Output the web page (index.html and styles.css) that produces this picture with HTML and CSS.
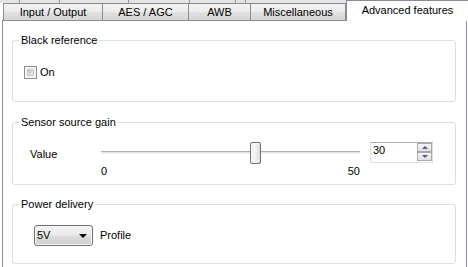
FILE: index.html
```html
<!DOCTYPE html>
<html>
<head>
<meta charset="utf-8">
<link rel="stylesheet" href="styles.css">
</head>
<body>
<div class="window">
  <div class="tabbar">
    <div class="tab t1">Input / Output</div>
    <div class="tab t2">AES / AGC</div>
    <div class="tab t3">AWB</div>
    <div class="tab t4">Miscellaneous</div>
    <div class="tab active">Advanced features</div>
  </div>
  <div class="panel">
    <fieldset class="group g1">
      <legend>Black reference</legend>
      <div class="check">
        <span class="box"><span class="box-inner"></span></span>
        <span class="check-label">On</span>
      </div>
    </fieldset>
    <fieldset class="group g2">
      <legend>Sensor source gain</legend>
      <div class="gain-row">
        <span class="gain-label">Value</span>
        <div class="slider">
          <div class="track-area">
            <div class="track"></div>
            <div class="thumb" style="left:149px"></div>
          </div>
          <div class="ticks"><span>0</span><span>50</span></div>
        </div>
        <div class="spin">
          <span class="spin-value">30</span>
          <span class="spin-buttons">
            <span class="spin-btn"><span class="tri-up"></span></span>
            <span class="spin-btn"><span class="tri-down"></span></span>
          </span>
        </div>
      </div>
    </fieldset>
    <fieldset class="group g3">
      <legend>Power delivery</legend>
      <div class="power-row">
        <div class="combo">
          <span class="combo-value">5V</span>
          <span class="combo-arrow"></span>
        </div>
        <span class="combo-label">Profile</span>
      </div>
    </fieldset>
  </div>
</div>
</body>
</html>
```
FILE: styles.css
```css
html, body {
  margin: 0;
  padding: 0;
  background: #ffffff;
  overflow: hidden;
}
body {
  font-family: "Liberation Sans", Arial, sans-serif;
  font-size: 11px;
  color: #000;
  width: 468px;
  height: 267px;
}
.window {
  width: 468px;
}
.tabbar {
  display: flex;
  align-items: flex-end;
  height: 20px;
  padding-left: 3px;
  box-sizing: border-box;
  background:
    linear-gradient(#8f929a, #8f929a) 19px 0 / 1px 3px no-repeat,
    linear-gradient(#8f929a, #8f929a) 59px 0 / 1px 3px no-repeat,
    linear-gradient(#8f929a, #8f929a) 128px 0 / 1px 3px no-repeat,
    linear-gradient(#8f929a, #8f929a) 189px 0 / 1px 3px no-repeat,
    linear-gradient(#8f929a, #8f929a) 235px 0 / 1px 3px no-repeat,
    linear-gradient(#8f929a, #8f929a) 245px 0 / 1px 3px no-repeat,
    linear-gradient(#e4e4e4, #e4e4e4) 0 0 / 100% 3px no-repeat;
}
.tab {
  box-sizing: border-box;
  height: 17px;
  line-height: 16px;
  text-align: center;
  white-space: nowrap;
  border-top: 1px solid #898c95;
  border-left: 1px solid #898c95;
  background: linear-gradient(#f3f3f3, #ebebeb 50%, #dfdfdf 55%, #d6d6d6);
}
.t1 { width: 99px; }
.t2 { width: 86px; }
.t3 { width: 62px; }
.t4 { width: 96px; border-right: 1px solid #898c95; }
.tab.active {
  flex: 1;
  height: 21px;
  line-height: 18px;
  margin-bottom: -1px;
  background: #ffffff;
  position: relative;
  z-index: 1;
  padding-bottom: 2px;
}
.panel {
  box-sizing: border-box;
  margin-left: 2px;
  width: 465px;
  height: 260px;
  border: 1px solid #898c95;
  border-bottom: none;
  background: #ffffff;
  padding: 13px 10px 0 9px;
}
.group {
  margin: 0;
  min-width: 0;
  border: 1px solid #d5dfe5;
  border-radius: 3px;
  padding: 0 6px;
}
.group legend {
  padding: 0 2px;
  line-height: 13px;
  font-size: 11px;
}
.g1 { padding-top: 19px; padding-bottom: 22px; margin-bottom: 14px; }
.g2 { padding-top: 13px; padding-bottom: 6px; margin-bottom: 13px; }
.g3 { padding-top: 14px; padding-bottom: 17px; }

/* checkbox */
.check {
  display: flex;
  align-items: center;
  height: 13px;
  margin-left: 5px;
}
.box {
  box-sizing: border-box;
  width: 13px;
  height: 13px;
  border: 1px solid #8e8f8f;
  background: #f4f4f4;
  padding: 2px;
  display: flex;
}
.box-inner {
  flex: 1;
  background: linear-gradient(135deg, #b7bcc2, #dcdddf 60%, #ececec);
  border: 1px solid #c9cbce;
}
.check-label {
  margin-left: 3px;
  line-height: 13px;
}

/* gain row */
.gain-row {
  display: flex;
  align-items: flex-start;
  padding-left: 11px;
}
.gain-label {
  width: 71px;
  margin-top: 6px;
  line-height: 13px;
}
.slider {
  width: 259px;
}
.track-area {
  position: relative;
  box-sizing: border-box;
  height: 22px;
  padding-top: 9px;
}
.track {
  height: 1px;
  border-top: 1px solid #b0b0b0;
  background: #e3e3e3;
  border-bottom: 1px solid #f4f4f4;
}
.thumb {
  position: absolute;
  top: 0;
  box-sizing: border-box;
  width: 11px;
  height: 22px;
  border: 1px solid #707070;
  border-radius: 2px;
  background: linear-gradient(90deg, #ececec, #f6f6f6 40%, #dcdcdc);
  box-shadow: inset 1px 1px 0 #ffffff;
}
.ticks {
  display: flex;
  justify-content: space-between;
  margin-top: 1px;
  line-height: 13px;
}
.spin {
  box-sizing: border-box;
  display: flex;
  width: 63px;
  height: 21px;
  margin-left: 10px;
  border: 1px solid #dbdfe6;
  border-top-color: #abadb3;
  border-left-color: #e2e3ea;
  background: #ffffff;
}
.spin-value {
  flex: 1;
  padding-left: 2px;
  padding-top: 1px;
  line-height: 13px;
}
.spin-buttons {
  display: flex;
  flex-direction: column;
  width: 15px;
}
.spin-btn {
  box-sizing: border-box;
  height: 9px;
  border: 1px solid #a9a9a9;
  background: linear-gradient(#f3f3f3, #e2e2e2);
  display: flex;
  align-items: center;
  justify-content: center;
}
.tri-up {
  width: 0;
  height: 0;
  border-left: 3px solid transparent;
  border-right: 3px solid transparent;
  border-bottom: 3px solid #4d6185;
}
.tri-down {
  width: 0;
  height: 0;
  border-left: 3px solid transparent;
  border-right: 3px solid transparent;
  border-top: 3px solid #4d6185;
}

/* power row */
.power-row {
  display: flex;
  align-items: center;
  margin-left: 15px;
}
.combo {
  box-sizing: border-box;
  display: flex;
  align-items: center;
  justify-content: space-between;
  width: 59px;
  height: 21px;
  border: 1px solid #707070;
  border-radius: 3px;
  background: linear-gradient(#f2f2f2, #ebebeb 48%, #dddddd 52%, #cfcfcf);
  padding: 0 5px 0 2px;
  box-shadow: inset 0 0 0 1px #f8f8f8;
}
.combo-value {
  line-height: 13px;
}
.combo-arrow {
  width: 0;
  height: 0;
  border-left: 4px solid transparent;
  border-right: 4px solid transparent;
  border-top: 4px solid #000;
}
.combo-label {
  margin-left: 7px;
  line-height: 13px;
}
```
